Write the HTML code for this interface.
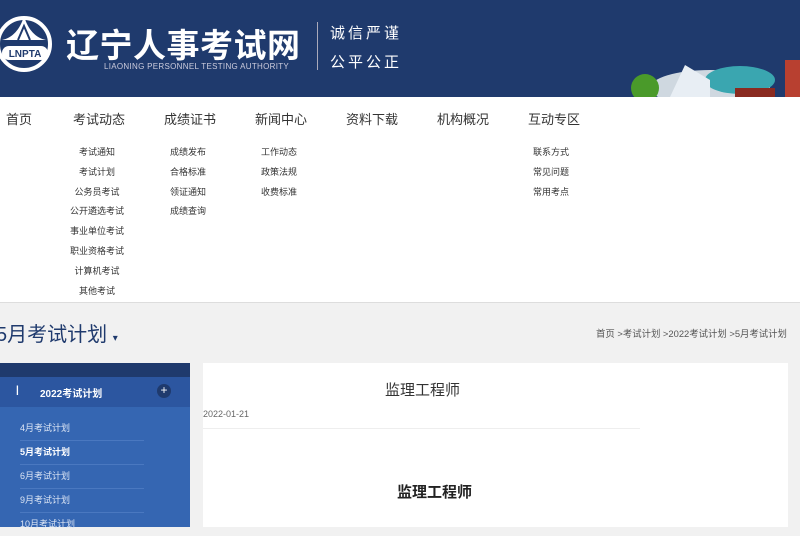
<!DOCTYPE html>
<html><head><meta charset="utf-8"><style>
body{margin:0;width:800px;height:527px;overflow:hidden;background:#f1f1f1;font-family:"Liberation Sans","Noto Sans CJK SC",sans-serif;position:relative}
.hd{position:absolute;left:0;top:0;width:800px;height:97px;background:#1f3a6d;overflow:hidden}
.a{position:absolute;white-space:nowrap}
.nav{position:absolute;top:97px;left:0;width:800px;height:205px;background:#fff;border-bottom:1px solid #ddd}
.nav .m{position:absolute;top:12px;font-size:13px;color:#333}
.sub{position:absolute;top:46px;font-size:9px;color:#333;text-align:center;line-height:19.8px}
</style></head><body>
<div class="hd">
<svg class="a" style="left:0;top:12px" width="56" height="64" viewBox="0 0 56 64">
<circle cx="24" cy="32" r="26" fill="none" stroke="#fff" stroke-width="4"/>
<path d="M24 4 C20 18 12 26 2 28 L46 28 C36 26 28 18 24 4Z" fill="#fff"/>
<path d="M18 28 L24 14 L30 28" fill="none" stroke="#1f3a6d" stroke-width="2"/>
<rect x="2" y="34" width="46" height="14" rx="7" fill="#fff"/>
<text x="25" y="45" font-size="10" font-weight="bold" fill="#1f3a6d" text-anchor="middle" font-family="Liberation Sans">LNPTA</text>
</svg>
<div class="a" style="left:66px;top:19px;font-size:33px;font-weight:bold;color:#fff;letter-spacing:0.5px">辽宁人事考试网</div>
<div class="a" style="left:104px;top:62px;font-size:8px;color:#ccd;letter-spacing:0.3px">LIAONING PERSONNEL TESTING AUTHORITY</div>
<div class="a" style="left:317px;top:22px;width:1px;height:48px;background:#aab"></div>
<div class="a" style="left:330px;top:22px;font-size:15px;color:#fff;letter-spacing:3px">诚信严谨</div>
<div class="a" style="left:330px;top:51px;font-size:15px;color:#fff;letter-spacing:3px">公平公正</div>
<svg class="a" style="left:610px;top:50px" width="190" height="47">
<ellipse cx="100" cy="38" rx="60" ry="18" fill="#cfd8e0"/>
<ellipse cx="130" cy="30" rx="35" ry="14" fill="#3aa6b0"/>
<path d="M60 47 L75 15 L100 30 L100 47Z" fill="#e8eef4"/>
<rect x="125" y="38" width="40" height="9" fill="#8a2a20"/>
<circle cx="35" cy="38" r="14" fill="#4a9a2a"/>
<rect x="175" y="10" width="15" height="37" fill="#b84030"/>
</svg>
</div>
<div class="nav">
<div class="m" style="left:6px">首页</div>
<div class="m" style="left:73px">考试动态</div>
<div class="m" style="left:164px">成绩证书</div>
<div class="m" style="left:255px">新闻中心</div>
<div class="m" style="left:346px">资料下载</div>
<div class="m" style="left:437px">机构概况</div>
<div class="m" style="left:528px">互动专区</div>
<div class="sub" style="left:67px;width:60px">考试通知<br>考试计划<br>公务员考试<br>公开遴选考试<br>事业单位考试<br>职业资格考试<br>计算机考试<br>其他考试</div>
<div class="sub" style="left:158px;width:60px">成绩发布<br>合格标准<br>领证通知<br>成绩查询</div>
<div class="sub" style="left:249px;width:60px">工作动态<br>政策法规<br>收费标准</div>
<div class="sub" style="left:521px;width:60px">联系方式<br>常见问题<br>常用考点</div>
</div>
<div class="a" style="left:-4px;top:318px;font-size:20px;color:#1f3a6d">5月考试计划 <span style="font-size:10px">▾</span></div>
<div class="a" style="left:596px;top:326px;font-size:9.4px;color:#555">首页 &gt;考试计划 &gt;2022考试计划 &gt;5月考试计划</div>
<div class="a" style="left:0;top:363px;width:190px;height:164px;background:#3566b2">
<div style="height:14px;background:#1f3a6d"></div>
<div style="height:30px;background:#2c56a0;position:relative;color:#fff;font-size:10px;font-weight:bold">
<span class="a" style="left:16px;top:8px">|</span><span class="a" style="left:40px;top:8px">2022考试计划</span>
<span class="a" style="left:157px;top:7px;width:14px;height:14px;border-radius:7px;background:#1f3a6d;text-align:center;line-height:13px;font-size:12px;font-weight:normal">+</span></div>
<div style="font-size:9px;color:#dde6f5;padding-left:20px;line-height:23px;margin-top:10px">
<div style="border-bottom:1px solid #4a78c0;width:124px">4月考试计划</div>
<div style="border-bottom:1px solid #4a78c0;width:124px;color:#fff;font-weight:bold">5月考试计划</div>
<div style="border-bottom:1px solid #4a78c0;width:124px">6月考试计划</div>
<div style="border-bottom:1px solid #4a78c0;width:124px">9月考试计划</div>
<div>10月考试计划</div></div>
</div>
<div class="a" style="left:203px;top:363px;width:585px;height:164px;background:#fff">
<div class="a" style="left:182px;top:16px;font-size:15px;color:#333">监理工程师</div>
<div class="a" style="left:0;top:46px;font-size:9px;color:#666">2022-01-21</div>
<div class="a" style="left:0;top:65px;width:437px;height:1px;background:#eee"></div>
<div class="a" style="left:194px;top:118px;font-size:15px;font-weight:bold;color:#222">监理工程师</div>
</div>
</body></html>
